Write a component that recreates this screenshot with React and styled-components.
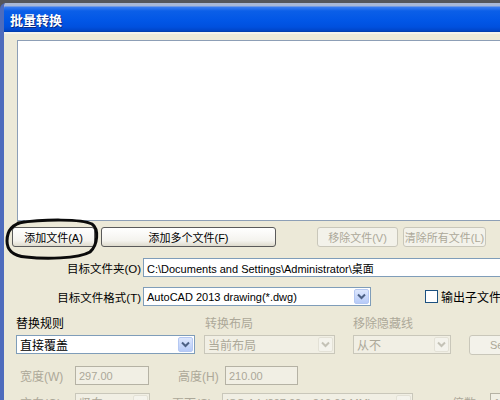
import React from "react";
import styled, { createGlobalStyle } from "styled-components";

const GlobalStyle = createGlobalStyle`
  html, body {
    margin: 0;
    padding: 0;
    background: #ece9d8;
    overflow: hidden;
  }
  body {
    font-family: "Liberation Sans", "Noto Sans CJK SC", sans-serif;
    font-size: 11px;
    color: #000;
  }
`;

const Screen = styled.div`
  width: 500px;
  height: 400px;
  overflow: hidden;
  background: #55565a;
  padding-top: 3px;
  box-sizing: border-box;
`;

const Window = styled.div`
  width: 640px;
  height: 397px;
  background: #ece9d8;
  border-left: 4px solid #4e6cbd;
  border-top-left-radius: 6px;
  overflow: hidden;
`;

const TitleBar = styled.div`
  height: 29px;
  display: flex;
  align-items: center;
  padding-left: 6px;
  background: linear-gradient(
    to bottom,
    #a9b8d6 0px,
    #a9b8d6 3px,
    #3a7cf0 4px,
    #0b5fe8 8px,
    #0156e6 18px,
    #0050de 24px,
    #0047cc 27px,
    #003ba8 29px
  );
  color: #fff;
  font-family: "Noto Sans CJK SC", sans-serif;
  font-weight: 700;
  font-size: 13px;
  text-shadow: 1px 1px 0 #0a2a80;
  padding-top: 3px;
  box-sizing: border-box;
`;

const Body = styled.div`
  padding: 6px 0 0 8px;
  border-top: 2px solid #f3f2ec;
`;

const FileList = styled.div`
  margin-left: 5px;
  height: 179px;
  background: #fff;
  border: 1px solid #8d9fb6;
`;

const ButtonRow = styled.div`
  position: relative;
  display: flex;
  align-items: center;
  margin-top: 6px;
`;

const Button = styled.button`
  width: ${(p) => p.$w}px;
  height: 20px;
  margin-left: ${(p) => p.$ml || 0}px;
  padding: 0;
  font: inherit;
  font-size: 11px;
  white-space: nowrap;
  overflow: hidden;
  border-radius: 3px;
  border: 1px solid ${(p) => (p.disabled ? "#c9c7ba" : "#5a5a5a")};
  background: ${(p) =>
    p.disabled
      ? "#f3f2ea"
      : "linear-gradient(to bottom, #ffffff, #f4f3ee 70%, #dedbcd)"};
  color: ${(p) => (p.disabled ? "#aca899" : "#000")};
`;

const Scribble = styled.svg`
  position: absolute;
  left: -8px;
  top: -8px;
  overflow: visible;
  pointer-events: none;
`;

const FieldRow = styled.div`
  display: flex;
  align-items: center;
  margin-top: ${(p) => p.$mt}px;
`;

const FieldLabel = styled.div`
  width: 129px;
  margin-right: 2px;
  text-align: right;
  white-space: nowrap;
  font-size: 11.5px;
`;

const TextInput = styled.div`
  width: ${(p) => p.$w}px;
  height: 19px;
  box-sizing: border-box;
  border: 1px solid ${(p) => (p.$disabled ? "#b5b2a4" : "#7f9db9")};
  background: ${(p) => (p.$disabled ? "#f1efe4" : "#fff")};
  color: ${(p) => (p.$disabled ? "#aca899" : "#000")};
  display: flex;
  align-items: center;
  padding-left: 3px;
  white-space: nowrap;
  overflow: hidden;
`;

const Select = styled.div`
  width: ${(p) => p.$w}px;
  height: 19px;
  box-sizing: border-box;
  border: 1px solid ${(p) => (p.$disabled ? "#c9c7ba" : "#7f9db9")};
  background: ${(p) => (p.$disabled ? "#f1efe4" : "#fff")};
  color: ${(p) => (p.$disabled ? "#aca899" : "#000")};
  display: flex;
  align-items: center;
  white-space: nowrap;
  overflow: hidden;
`;

const SelectText = styled.span`
  flex: 1;
  padding-left: 3px;
  overflow: hidden;
  font-size: ${(p) => (p.$cjk ? 12 : 11)}px;
`;

const ArrowBox = styled.div`
  width: 15px;
  height: 15px;
  margin-right: 1px;
  border-radius: 2px;
  border: 1px solid ${(p) => (p.$disabled ? "#e3e1d6" : "#b5c8f2")};
  background: ${(p) =>
    p.$disabled ? "#f4f3ec" : "linear-gradient(to bottom, #dde7fd, #b7cbf8)"};
  display: flex;
  align-items: center;
  justify-content: center;
  box-sizing: border-box;
`;

const CheckBox = styled.div`
  width: 13px;
  height: 13px;
  box-sizing: border-box;
  border: 1px solid #1c5180;
  background: #fff;
  margin-left: ${(p) => p.$ml}px;
  margin-right: 3px;
`;

const Plain = styled.span`
  white-space: nowrap;
  font-size: 12px;
`;

const Rules = styled.div`
  display: flex;
  margin-top: 11px;
`;

const RuleCol = styled.div`
  width: ${(p) => p.$w}px;
  margin-left: ${(p) => p.$ml}px;
  flex-shrink: 0;
  display: flex;
  flex-direction: column;
`;

const RuleHead = styled.div`
  height: 14px;
  line-height: 14px;
  margin-bottom: 4px;
  padding-left: ${(p) => p.$pl || 0}px;
  color: ${(p) => (p.$dim ? "#aca899" : "#000")};
  white-space: nowrap;
  font-size: 12px;
`;

const SizeRow = styled.div`
  display: flex;
  align-items: center;
  margin-top: ${(p) => p.$mt}px;
`;

const SizeLabel = styled.div`
  width: ${(p) => p.$w}px;
  margin-left: ${(p) => p.$ml}px;
  color: #aca899;
  white-space: nowrap;
  flex-shrink: 0;
  font-size: 12px;
`;

function Arrow({ disabled }) {
  return (
    <ArrowBox $disabled={disabled}>
      <svg width="9" height="7" viewBox="0 0 9 7">
        <path
          d="M1 1.5 L4.5 5 L8 1.5"
          fill="none"
          stroke={disabled ? "#c4c2b6" : "#4d6185"}
          strokeWidth="2"
        />
      </svg>
    </ArrowBox>
  );
}

function Dropdown({ w, text, disabled, cjk }) {
  return (
    <Select $w={w} $disabled={disabled}>
      <SelectText $cjk={cjk}>{text}</SelectText>
      <Arrow disabled={disabled} />
    </Select>
  );
}

export default function App() {
  return (
    <>
      <GlobalStyle />
      <Screen>
        <Window>
          <TitleBar>批量转换</TitleBar>
          <Body>
            <FileList />

            <ButtonRow>
              <Button $w={83}>添加文件(A)</Button>
              <Button $w={175} $ml={6}>
                添加多个文件(F)
              </Button>
              <Button $w={81} $ml={41} disabled>
                移除文件(V)
              </Button>
              <Button $w={83} $ml={5} disabled>
                清除所有文件(L)
              </Button>
              <Scribble width="96" height="40" viewBox="0 0 96 40">
                <path
                  d="M14 4 C40 0 78 0 88 5 C95 10 94 26 86 33 C74 40 40 40 22 38 C8 37 3 30 3 22 C3 12 8 5 20 3"
                  fill="none"
                  stroke="#0a0a0a"
                  strokeWidth="3"
                  strokeLinecap="round"
                />
              </Scribble>
            </ButtonRow>

            <FieldRow $mt={11}>
              <FieldLabel>目标文件夹(O)</FieldLabel>
              <TextInput $w={420}>
                C:\Documents and Settings\Administrator\桌面
              </TextInput>
            </FieldRow>

            <FieldRow $mt={10}>
              <FieldLabel>目标文件格式(T)</FieldLabel>
              <Dropdown w={228} text="AutoCAD 2013 drawing(*.dwg)" />
              <CheckBox $ml={54} />
              <Plain>输出子文件夹</Plain>
            </FieldRow>

            <Rules>
              <RuleCol $w={179} $ml={4}>
                <RuleHead>替换规则</RuleHead>
                <Dropdown w={179} text="直接覆盖" cjk />
              </RuleCol>
              <RuleCol $w={131} $ml={9}>
                <RuleHead $dim $pl={1}>
                  转换布局
                </RuleHead>
                <Dropdown w={131} text="当前布局" disabled cjk />
              </RuleCol>
              <RuleCol $w={98} $ml={18}>
                <RuleHead $dim>移除隐藏线</RuleHead>
                <Dropdown w={98} text="从不" disabled cjk />
              </RuleCol>
              <RuleCol $w={80} $ml={18}>
                <RuleHead />
                <Button $w={80} disabled>
                  Setup...
                </Button>
              </RuleCol>
            </Rules>

            <SizeRow $mt={11}>
              <SizeLabel $w={55} $ml={8}>
                宽度(W)
              </SizeLabel>
              <TextInput $w={74} $disabled>
                297.00
              </TextInput>
              <SizeLabel $w={47} $ml={29}>
                高度(H)
              </SizeLabel>
              <TextInput $w={73} $disabled>
                210.00
              </TextInput>
            </SizeRow>

            <SizeRow $mt={8}>
              <SizeLabel $w={55} $ml={8}>
                方向(O)
              </SizeLabel>
              <Dropdown w={75} text="竖向" disabled cjk />
              <SizeLabel $w={50} $ml={22}>
                页面(S)
              </SizeLabel>
              <Dropdown w={191} text="ISO A4 (297.00 x 210.00 MM)" disabled />
              <SizeLabel $w={38} $ml={39}>
                倍数
              </SizeLabel>
              <TextInput $w={60} $disabled>
                1
              </TextInput>
            </SizeRow>
          </Body>
        </Window>
      </Screen>
    </>
  );
}
